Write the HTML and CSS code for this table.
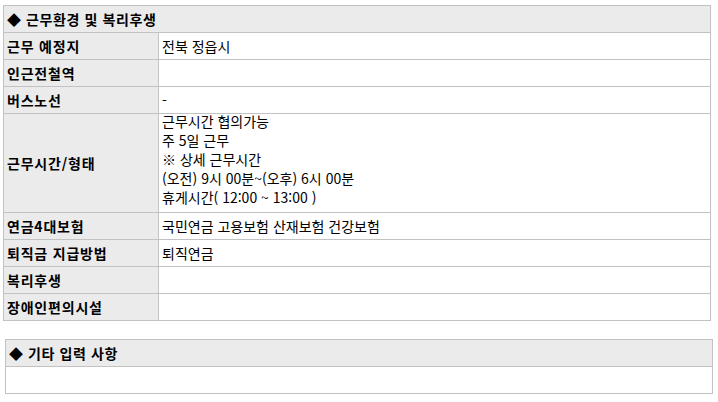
FILE: index.html
```html
<!DOCTYPE html>
<html lang="ko">
<head>
<meta charset="utf-8">
<link rel="stylesheet" href="styles.css">
</head>
<body>
<section class="box box-main">
  <div class="head">◆ 근무환경 및 복리후생</div>
  <div class="label">근무 예정지</div><div class="value">전북 정읍시</div>
  <div class="label">인근전철역</div><div class="value"></div>
  <div class="label">버스노선</div><div class="value">-</div>
  <div class="label">근무시간/형태</div>
  <div class="value multi"><div class="lines">근무시간 협의가능<br>주 5일 근무<br>※ 상세 근무시간<br>(오전) 9시 00분~(오후) 6시 00분<br>휴게시간( 12:00 ~ 13:00 )</div></div>
  <div class="label">연금4대보험</div><div class="value">국민연금 고용보험 산재보험 건강보험</div>
  <div class="label">퇴직금 지급방법</div><div class="value">퇴직연금</div>
  <div class="label">복리후생</div><div class="value"></div>
  <div class="label">장애인편의시설</div><div class="value"></div>
</section>
<section class="box box-etc">
  <div class="head">◆ 기타 입력 사항</div>
  <div class="value full"></div>
</section>
</body>
</html>
```

FILE: styles.css
```css
html, body {
  margin: 0;
  padding: 0;
  background: #fff;
}
body {
  font-family: "Noto Sans CJK KR", "Noto Sans", sans-serif;
  font-size: 14px;
  color: #000;
  padding-top: 5px;
}
.box {
  display: grid;
  grid-template-columns: 155px 552px;
  border-top: 1px solid #c2c2c2;
  border-left: 1px solid #c2c2c2;
  width: 708px;
  box-sizing: border-box;
}
.box-main {
  margin-left: 3px;
}
.box-etc {
  margin-left: 5px;
  margin-top: 18px;
}
.box > div {
  border-right: 1px solid #c2c2c2;
  border-bottom: 1px solid #c2c2c2;
  min-height: 27px;
  box-sizing: border-box;
  display: flex;
  align-items: center;
  padding-left: 3px;
  line-height: 19px;
}
.head {
  grid-column: 1 / -1;
  background: #ebebeb;
  font-weight: bold;
  letter-spacing: 0.6px;
}
.label {
  background: #ebebeb;
  font-weight: bold;
  letter-spacing: 0.8px;
}
.value.multi {
  height: 99px;
  align-items: flex-start;
}
.lines {
  margin-top: -2px;
}
.value.full {
  grid-column: 1 / -1;
}
```
